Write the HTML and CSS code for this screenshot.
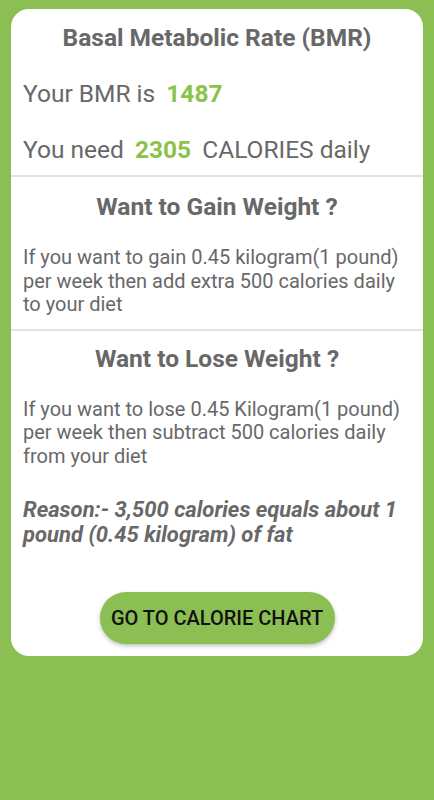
FILE: index.html
```html
<!DOCTYPE html>
<html lang="en">
<head>
    <meta charset="UTF-8" />
    <link rel="stylesheet" href="styles.css">
</head>
<body>

<div class="card">
    <div class="block">
        <h1 class="title">Basal Metabolic Rate (BMR)</h1>
        <p class="stat">Your BMR is <span class="num">1487</span></p>
        <p class="stat">You need <span class="num">2305</span> CALORIES daily</p>
    </div>

    <div class="block">
        <h2 class="heading">Want to Gain Weight ?</h2>
        <p class="text">If you want to gain 0.45 kilogram(1 pound) per week then add extra 500 calories daily to your diet</p>
    </div>

    <div class="block last">
        <h2 class="heading">Want to Lose Weight ?</h2>
        <p class="text">If you want to lose 0.45 Kilogram(1 pound) per week then subtract 500 calories daily from your diet</p>
        <p class="reason">Reason:- 3,500 calories equals about 1 pound (0.45 kilogram) of fat</p>
    </div>

    <div class="actions">
        <button class="chart-btn">GO TO CALORIE CHART</button>
    </div>
</div>

</body>
</html>
```

FILE: styles.css
```css
body {
    font-family: Roboto, 'Liberation Sans', sans-serif;
    background-color: #8bbf53;
    margin: 0;
    padding: 9px 11px;
}

.card {
    background-color: white;
    border-radius: 18px;
    height: 647px;
    box-sizing: border-box;
    color: #686868;
}

.block {
    border-bottom: 2px solid #e2e2e2;
    padding: 0 12px;
}

.block.last {
    border-bottom: none;
}

.title {
    margin: 0;
    padding-top: 15px;
    font-size: 24.5px;
    font-weight: bold;
    text-align: center;
    line-height: 28px;
}

.stat {
    margin: 0;
    font-size: 24.5px;
    line-height: 28px;
    padding-top: 28px;
}

.stat:last-child {
    padding-bottom: 11px;
}

.num {
    color: #8bc34a;
    font-weight: bold;
    margin: 0 5px 0 5px;
}

.heading {
    margin: 0;
    padding-top: 16px;
    font-size: 24.5px;
    font-weight: bold;
    text-align: center;
    line-height: 28px;
}

.last .heading {
    padding-top: 14px;
}

.text {
    margin: 0;
    padding: 25px 0 12px;
    font-size: 20px;
    line-height: 23.5px;
}

.reason {
    margin: 0;
    padding-top: 17px;
    font-size: 22px;
    line-height: 25px;
    font-weight: bold;
    font-style: italic;
}

.actions {
    text-align: center;
    padding-top: 45px;
}

.chart-btn {
    font-family: Roboto, 'Liberation Sans', sans-serif;
    font-size: 20px;
    font-weight: 500;
    color: #111111;
    background-color: #8bbf53;
    border: none;
    border-radius: 26px;
    height: 52px;
    width: 235px;
    box-shadow: 0 2px 4px rgba(0,0,0,0.25);
    cursor: pointer;
}
```
